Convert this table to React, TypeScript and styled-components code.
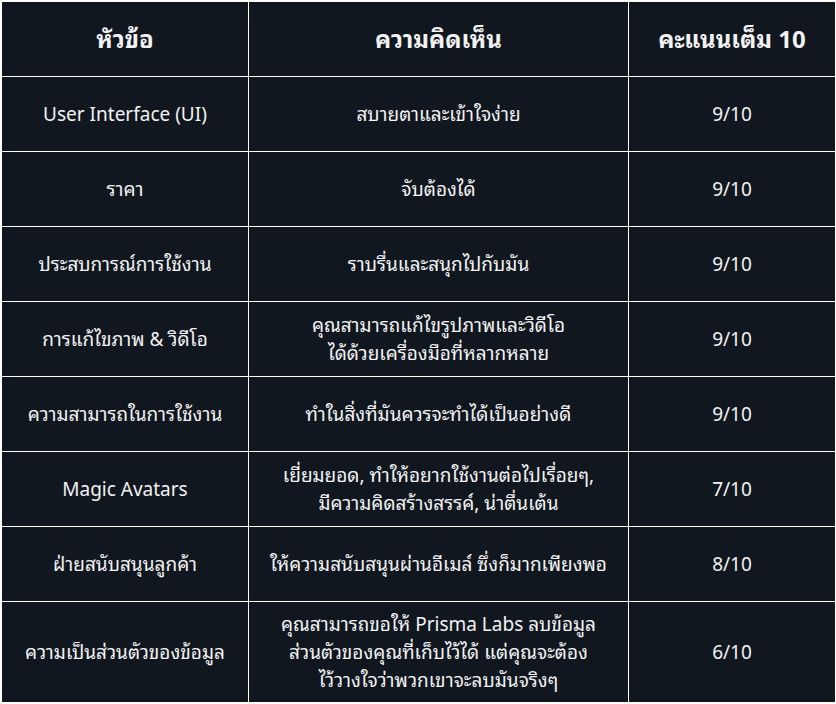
import React from "react";
import styled, { createGlobalStyle } from "styled-components";

const Global = createGlobalStyle`
  html, body { margin: 0; padding: 0; background: #ffffff; }
  body { font-family: "Noto Sans", "Noto Sans Thai Looped", "Noto Sans Thai", sans-serif; }
`;

const Wrap = styled.div`
  padding: 1px;
  width: 836px;
  box-sizing: border-box;
`;

const Table = styled.table`
  width: 834px;
  border-collapse: collapse;
  table-layout: fixed;
  background: #10171f;
  color: #f2f2f2;
`;

const Th = styled.th`
  border: 1px solid #ffffff;
  height: 75px;
  padding: 8px 10px;
  box-sizing: border-box;
  font-size: 24px;
  font-weight: 700;
  line-height: 28px;
  text-align: center;
  vertical-align: middle;
`;

const Td = styled.td`
  border: 1px solid #ffffff;
  height: 75px;
  padding: 8px 10px;
  box-sizing: border-box;
  font-size: 19px;
  line-height: 28px;
  text-align: center;
  vertical-align: middle;
`;

type Row = { topic: string; comment: string[]; score: string };

const rows: Row[] = [
  { topic: "User Interface (UI)", comment: ["สบายตาและเข้าใจง่าย"], score: "9/10" },
  { topic: "ราคา", comment: ["จับต้องได้"], score: "9/10" },
  { topic: "ประสบการณ์การใช้งาน", comment: ["ราบรื่นและสนุกไปกับมัน"], score: "9/10" },
  {
    topic: "การแก้ไขภาพ & วิดีโอ",
    comment: ["คุณสามารถแก้ไขรูปภาพและวิดีโอ", "ได้ด้วยเครื่องมือที่หลากหลาย"],
    score: "9/10",
  },
  { topic: "ความสามารถในการใช้งาน", comment: ["ทำในสิ่งที่มันควรจะทำได้เป็นอย่างดี"], score: "9/10" },
  {
    topic: "Magic Avatars",
    comment: ["เยี่ยมยอด, ทำให้อยากใช้งานต่อไปเรื่อยๆ,", "มีความคิดสร้างสรรค์, น่าตื่นเต้น"],
    score: "7/10",
  },
  { topic: "ฝ่ายสนับสนุนลูกค้า", comment: ["ให้ความสนับสนุนผ่านอีเมล์ ซึ่งก็มากเพียงพอ"], score: "8/10" },
  {
    topic: "ความเป็นส่วนตัวของข้อมูล",
    comment: [
      "คุณสามารถขอให้ Prisma Labs ลบข้อมูล",
      "ส่วนตัวของคุณที่เก็บไว้ได้ แต่คุณจะต้อง",
      "ไว้วางใจว่าพวกเขาจะลบมันจริงๆ",
    ],
    score: "6/10",
  },
];

export default function App() {
  return (
    <>
      <Global />
      <Wrap>
        <Table>
          <colgroup>
            <col style={{ width: "247px" }} />
            <col style={{ width: "380px" }} />
            <col style={{ width: "207px" }} />
          </colgroup>
          <thead>
            <tr>
              <Th>หัวข้อ</Th>
              <Th>ความคิดเห็น</Th>
              <Th>คะแนนเต็ม 10</Th>
            </tr>
          </thead>
          <tbody>
            {rows.map((r) => (
              <tr key={r.topic}>
                <Td>{r.topic}</Td>
                <Td>
                  {r.comment.map((c, i) => (
                    <React.Fragment key={i}>
                      {i > 0 && <br />}
                      {c}
                    </React.Fragment>
                  ))}
                </Td>
                <Td>{r.score}</Td>
              </tr>
            ))}
          </tbody>
        </Table>
      </Wrap>
    </>
  );
}
